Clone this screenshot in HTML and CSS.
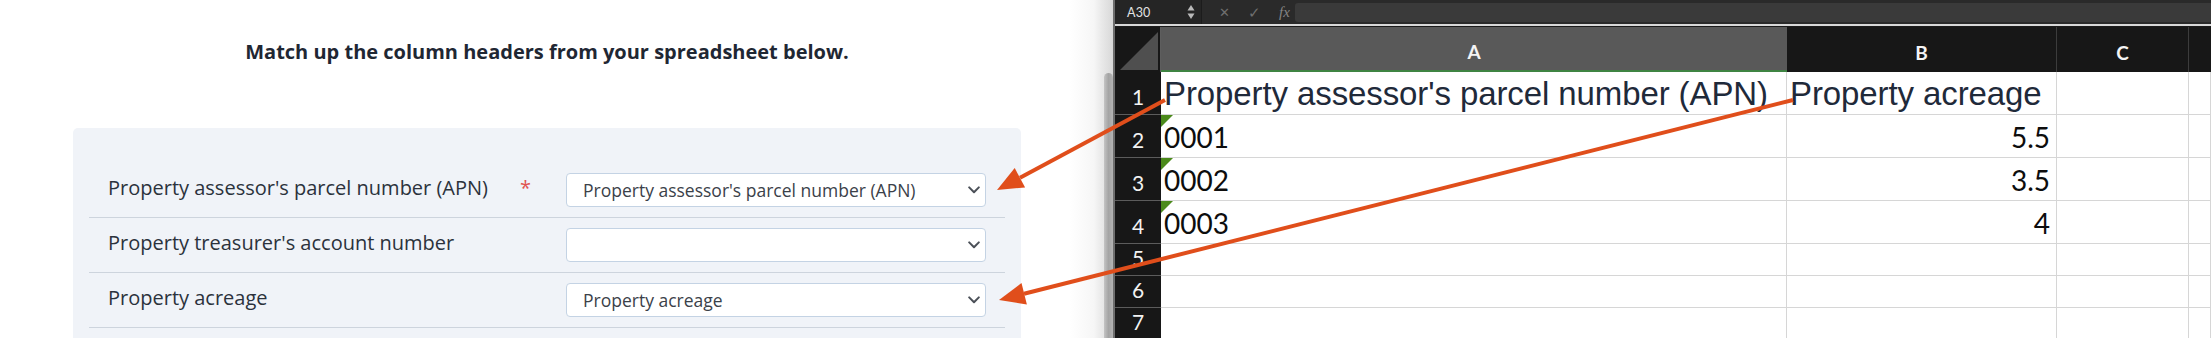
FILE: index.html
```html
<!DOCTYPE html>
<html lang="en">
<head>
<meta charset="utf-8">
<title>Column mapping</title>
<link rel="stylesheet" href="styles.css">
</head>
<body>
<div class="screen">
  <section class="browser">
    <div class="page">
      <h1 class="title">Match up the column headers from your spreadsheet below.</h1>
      <div class="panel">
        <div class="map-row">
          <span class="label">Property assessor's parcel number (APN)</span>
          <span class="req">*</span>
          <div class="select">
            <span class="select-value">Property assessor's parcel number (APN)</span>
            <svg class="chev" width="12" height="8" viewBox="0 0 12 8"><path d="M1.2 1.4L6 6.2l4.8-4.8"/></svg>
          </div>
        </div>
        <div class="map-row">
          <span class="label">Property treasurer's account number</span>
          <span class="req"></span>
          <div class="select">
            <span class="select-value"></span>
            <svg class="chev" width="12" height="8" viewBox="0 0 12 8"><path d="M1.2 1.4L6 6.2l4.8-4.8"/></svg>
          </div>
        </div>
        <div class="map-row">
          <span class="label">Property acreage</span>
          <span class="req"></span>
          <div class="select">
            <span class="select-value">Property acreage</span>
            <svg class="chev" width="12" height="8" viewBox="0 0 12 8"><path d="M1.2 1.4L6 6.2l4.8-4.8"/></svg>
          </div>
        </div>
        <div class="map-row map-row-empty"></div>
      </div>
    </div>
    <div class="edge"><div class="thumb"></div></div>
  </section>

  <section class="excel">
    <div class="toolbar">
      <div class="namebox">
        <span class="name">A30</span>
        <svg class="spin" width="8" height="16" viewBox="0 0 8 16"><path d="M4 1L7.5 6.5H0.5Z"/><path d="M4 15L7.5 9.5H0.5Z"/></svg>
      </div>
      <div class="fx-icons">
        <span class="fx-x">✕</span>
        <span class="fx-ok">✓</span>
        <span class="fx-f">fx</span>
      </div>
      <div class="formula"></div>
    </div>
    <div class="sheet">
      <div class="corner"><div class="corner-tri"></div></div>
      <div class="colhead colhead-sel">A</div>
      <div class="colhead">B</div>
      <div class="colhead">C</div>
      <div class="colhead colhead-last"></div>

      <div class="rowhead">1</div>
      <div class="cell cell-head">Property assessor's parcel number (APN)</div>
      <div class="cell cell-head">Property acreage</div>
      <div class="cell"></div>
      <div class="cell"></div>

      <div class="rowhead">2</div>
      <div class="cell cell-data"><i class="flag"></i>0001</div>
      <div class="cell cell-data cell-num">5.5</div>
      <div class="cell"></div>
      <div class="cell"></div>

      <div class="rowhead">3</div>
      <div class="cell cell-data"><i class="flag"></i>0002</div>
      <div class="cell cell-data cell-num">3.5</div>
      <div class="cell"></div>
      <div class="cell"></div>

      <div class="rowhead">4</div>
      <div class="cell cell-data"><i class="flag"></i>0003</div>
      <div class="cell cell-data cell-num">4</div>
      <div class="cell"></div>
      <div class="cell"></div>

      <div class="rowhead">5</div>
      <div class="cell"></div>
      <div class="cell"></div>
      <div class="cell"></div>
      <div class="cell"></div>

      <div class="rowhead">6</div>
      <div class="cell"></div>
      <div class="cell"></div>
      <div class="cell"></div>
      <div class="cell"></div>

      <div class="rowhead">7</div>
      <div class="cell"></div>
      <div class="cell"></div>
      <div class="cell"></div>
      <div class="cell"></div>
    </div>
  </section>

  <svg class="arrows" width="2211" height="338" viewBox="0 0 2211 338">
    <g class="arrow">
      <line x1="1165" y1="100" x2="1020" y2="177.7"/>
      <polygon points="997,190 1014.7,168 1025.1,187.4"/>
    </g>
    <g class="arrow">
      <line x1="1793" y1="100" x2="1024" y2="293.7"/>
      <polygon points="999,300 1021.5,283 1026.9,304.4"/>
    </g>
  </svg>
</div>
</body>
</html>
```

FILE: styles.css
```css
* { box-sizing: border-box; }

html, body {
  margin: 0;
  padding: 0;
  width: 2211px;
  height: 338px;
  overflow: hidden;
  background: #ffffff;
}

.screen {
  position: relative;
  display: flex;
  width: 2211px;
  height: 338px;
  overflow: hidden;
}

/* ---------- left: web page ---------- */
.browser {
  display: flex;
  width: 1113px;
  flex: none;
  height: 338px;
  background: #ffffff;
}

.page {
  flex: 1;
  display: flex;
  flex-direction: column;
  font-family: "Open Sans", "Noto Sans", sans-serif;
  background: linear-gradient(to right, #ffffff 0, #ffffff 1070px, #f6f6f6 100%);
}

.title {
  margin: 39px 0 0;
  font-size: 20px;
  line-height: 26px;
  font-weight: 700;
  color: #1f2733;
  text-align: center;
}

.panel {
  margin: 63px 0 0 73px;
  width: 948px;
  flex: 1;
  background: #f0f3f8;
  border-radius: 5px 5px 0 0;
  padding: 35px 16px 0;
}

.map-row {
  display: grid;
  grid-template-columns: 412px 46px 420px;
  align-items: center;
  height: 55px;
  padding: 0 19px;
  border-bottom: 1px solid #cdd4dd;
}

.label {
  font-size: 20px;
  line-height: 27px;
  color: #2b323c;
  margin-bottom: 5px;
  white-space: nowrap;
}

.req {
  font-size: 20px;
  line-height: 27px;
  color: #e0534f;
  margin-bottom: 5px;
}

.select {
  display: flex;
  align-items: center;
  justify-content: space-between;
  height: 34px;
  background: #ffffff;
  border: 1px solid #c4d3e4;
  border-radius: 4px;
  padding: 0 5px 0 16px;
}

.select-value {
  font-size: 17.5px;
  line-height: 24px;
  color: #3b4149;
  white-space: nowrap;
}

.chev {
  display: block;
  fill: none;
  stroke: #4b5058;
  stroke-width: 2;
  stroke-linecap: round;
  stroke-linejoin: round;
}

.edge {
  width: 19px;
  flex: none;
  display: flex;
  justify-content: flex-end;
  background: linear-gradient(to right, #f6f6f6 0, #e9e9e9 40%, #d8d8d8 100%);
}

.thumb {
  width: 9px;
  margin-top: 73px;
  border-radius: 5px 5px 0 0;
  background: linear-gradient(to right, #c4c4c4, #a4a4a4 50%, #b4b4b4);
}

/* ---------- right: spreadsheet ---------- */
.excel {
  flex: 1;
  display: flex;
  flex-direction: column;
  background: #1b1b1b;
  border-left: 2px solid #6e6e6e;
  font-family: Lato, "Open Sans", sans-serif;
}

.toolbar {
  display: flex;
  align-items: center;
  height: 26px;
  flex: none;
  background: #2a2a2a;
  border-bottom: 2px solid #d8d8d8;
}

.namebox {
  display: flex;
  align-items: center;
  justify-content: space-between;
  width: 87px;
  height: 100%;
  padding: 0 6px 0 12px;
  background: #252525;
  border-right: 1px solid #1c1c1c;
}

.name {
  font-size: 12.5px;
  color: #e2e2e2;
  letter-spacing: 0.2px;
}

.spin { display: block; fill: #b9b9b9; }

.fx-icons {
  display: flex;
  align-items: center;
  height: 100%;
  padding-left: 17px;
  color: #6f6f6f;
}

.fx-x { font-size: 13px; width: 29px; }
.fx-ok { font-size: 15px; width: 31px; }
.fx-f {
  font-family: "Liberation Serif", "DejaVu Serif", serif;
  font-style: italic;
  font-size: 15px;
  color: #858585;
  width: 16px;
}

.formula {
  flex: 1;
  height: 19px;
  background: #3a3a3a;
  border-radius: 3px 0 0 3px;
}

.sheet {
  flex: 1;
  display: grid;
  grid-template-columns: 46px 626px 270px 132px 1fr;
  grid-template-rows: 45px 43px 43px 43px 43px 32px 32px 32px;
  margin-top: 1px;
}

.corner {
  display: flex;
  align-items: flex-end;
  justify-content: flex-end;
  padding: 0 2px 2px 0;
  background: #171717;
  border-right: 1px solid #5e5e5e;
}

.corner-tri {
  width: 38px;
  height: 38px;
  background: #4f4f4f;
  clip-path: polygon(100% 0, 100% 100%, 0 100%);
}

.colhead {
  display: flex;
  align-items: center;
  justify-content: center;
  padding-top: 5px;
  background: #171717;
  border-right: 1px solid #3c3c3c;
  color: #f4f4f4;
  font-size: 19px;
  font-weight: 700;
}

.colhead-sel {
  background: #595959;
  border-right: none;
  border-bottom: 2px solid #3f8443;
}

.colhead-last { border-right: none; }

.rowhead {
  display: flex;
  align-items: flex-end;
  justify-content: center;
  padding-bottom: 5px;
  background: #171717;
  border-bottom: 1px solid #5c5c5c;
  color: #f2f2f2;
  font-size: 21px;
  line-height: 24px;
}

.cell {
  position: relative;
  display: flex;
  align-items: flex-end;
  padding: 0 6px 0 3px;
  background: #ffffff;
  border-right: 1px solid #d6d6d6;
  border-bottom: 1px solid #d6d6d6;
  white-space: nowrap;
}

.cell-head {
  padding-bottom: 3px;
  font-family: "Liberation Sans", Arial, sans-serif;
  font-size: 33px;
  line-height: 34px;
  color: #1f2a3a;
  letter-spacing: -0.1px;
}

.cell-data {
  padding-bottom: 3px;
  font-size: 28px;
  line-height: 34px;
  color: #0d0d0d;
}

.cell-num { justify-content: flex-end; }

.flag {
  position: absolute;
  left: 0;
  top: 0;
  width: 12px;
  height: 12px;
  background: #4b8a1b;
  clip-path: polygon(0 0, 100% 0, 0 100%);
}

/* ---------- annotation arrows ---------- */
.arrows {
  position: absolute;
  left: 0;
  top: 0;
  pointer-events: none;
}

.arrow line {
  stroke: #e04e1b;
  stroke-width: 4;
}

.arrow polygon {
  fill: #e04e1b;
}
```
